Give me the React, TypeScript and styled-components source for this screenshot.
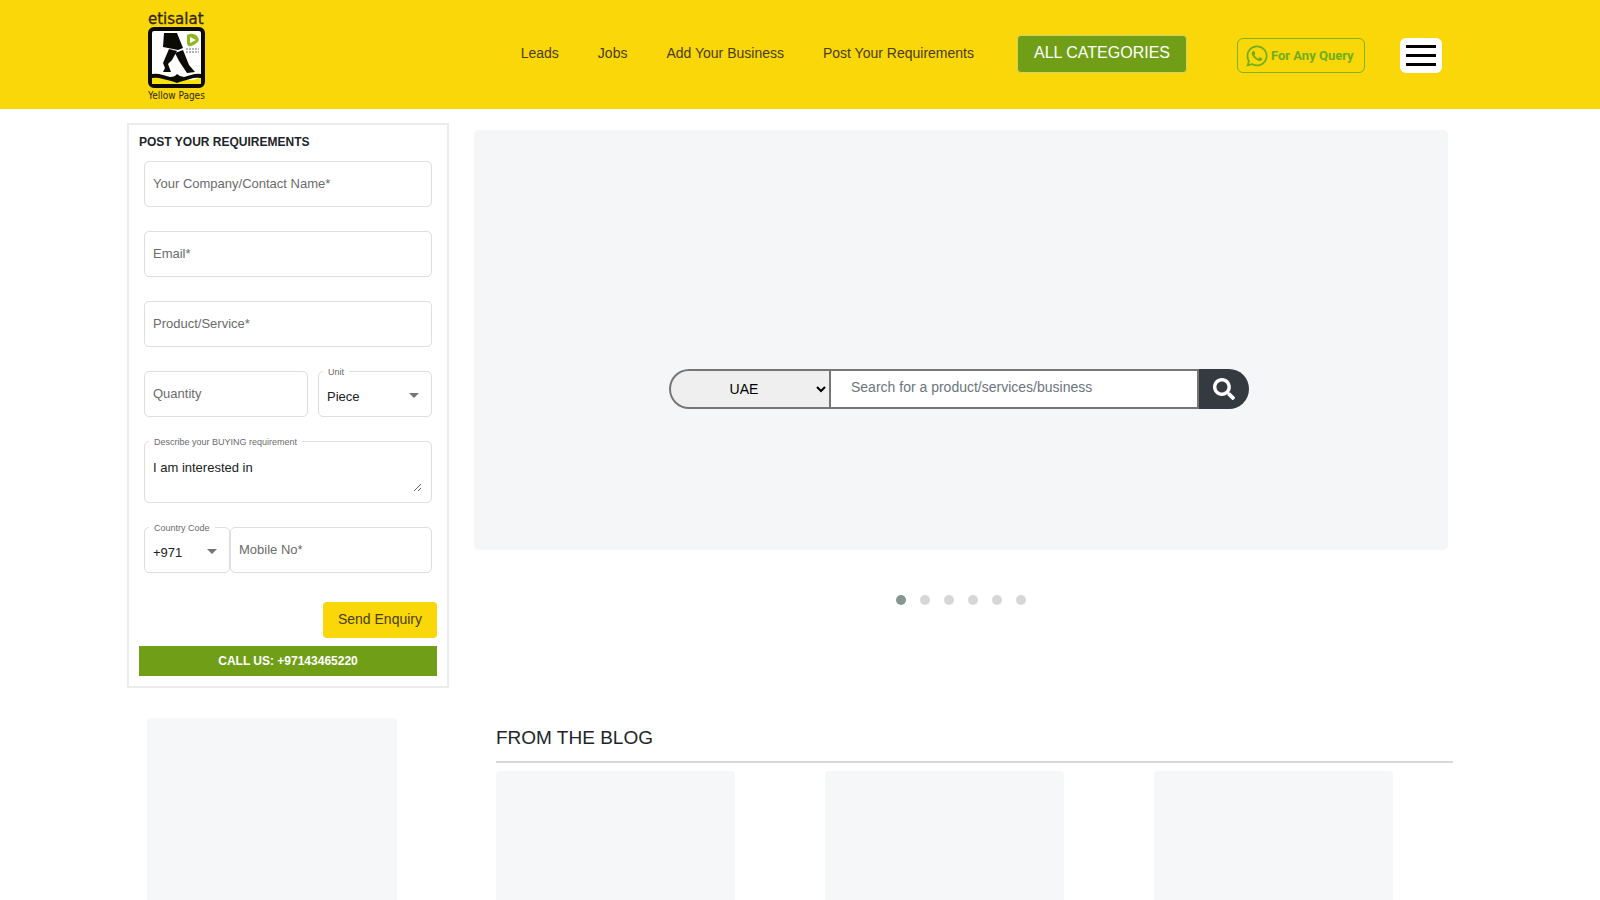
import React from "react";
import styled, { createGlobalStyle } from "styled-components";
import { FaSearch, FaWhatsapp } from "react-icons/fa";

const GlobalStyle = createGlobalStyle`
  *, *::before, *::after { box-sizing: border-box; }
  body {
    margin: 0;
    background: #fff;
    color: #212529;
    font-family: "Liberation Sans", Arial, sans-serif;
    font-size: 14px;
  }
  button, input, select, textarea { font-family: inherit; margin: 0; }
`;

const Header = styled.header`
  display: flex;
  align-items: flex-start;
  height: 109px;
  padding: 0 158px 0 148px;
  background: #f9d709;
`;

const LogoLink = styled.a`
  display: block;
  margin-top: 11px;
`;

const Nav = styled.nav`
  display: flex;
  gap: 39px;
  margin: 44px 43px 0 auto;
`;

const NavLink = styled.a`
  color: #4a3c10;
  font-size: 14px;
  line-height: 18px;
  text-decoration: none;
`;

const CategoriesButton = styled.button`
  height: 38px;
  margin-top: 35px;
  padding: 0 16px 2px;
  border: 1px solid #d5d06a;
  border-radius: 4px;
  background: #709f17;
  color: #fff;
  font-size: 16px;
`;

const QueryLink = styled.a`
  display: flex;
  align-items: center;
  gap: 2px;
  width: 128px;
  height: 35px;
  margin: 38px 35px 0 50px;
  padding-left: 7px;
  border: 1px solid #7fb21c;
  border-radius: 6px;
  color: #6fae1d;
  font-family: Roboto, sans-serif;
  font-size: 13px;
  font-weight: 700;
  text-decoration: none;
  white-space: nowrap;
`;

const MenuButton = styled.button`
  display: flex;
  flex-direction: column;
  justify-content: center;
  gap: 6px;
  width: 42px;
  height: 35px;
  margin-top: 38px;
  padding: 0 6px;
  border: 0;
  border-radius: 6px;
  background: #fff;
`;

const MenuBar = styled.span`
  height: 3px;
  background: #000;
`;

const Top = styled.main`
  display: grid;
  grid-template-columns: 322px minmax(0, 1fr);
  gap: 30px 25px;
  padding: 14px 147px 0 127px;
`;

const Enquiry = styled.form`
  padding: 10px;
  border: 2px solid #ebecee;
`;

const EnquiryTitle = styled.h2`
  margin: 0;
  font-size: 12px;
  line-height: 14px;
`;

const Fields = styled.div`
  display: grid;
  gap: 24px;
  padding: 12px 5px 0;
`;

const FieldRow = styled.div<{ $gap: number }>`
  display: flex;
  gap: ${(p) => p.$gap}px;
`;

const Field = styled.div<{ $width?: number; $tall?: boolean }>`
  position: relative;
  display: flex;
  flex: ${(p) => (p.$width ? `0 0 ${p.$width}px` : "1 1 0")};
  min-width: 0;
  height: ${(p) => (p.$tall ? 62 : 46)}px;
  border: 1px solid #dedede;
  border-radius: 5px;
`;

const FloatingLabel = styled.label`
  position: absolute;
  top: -6px;
  left: 4px;
  padding: 0 5px;
  background: #fff;
  color: #6b6b6b;
  font-size: 9px;
  line-height: 12px;
  white-space: nowrap;
`;

const TextInput = styled.input`
  width: 100%;
  padding: 0 8px 2px;
  border: 0;
  background: transparent;
  color: #212121;
  font-size: 13px;
  &::placeholder { color: #6b6b6b; opacity: 1; }
`;

const FieldSelect = styled.select`
  appearance: none;
  width: 100%;
  padding: 4px 8px 0;
  border: 0;
  background: transparent;
  color: #212121;
  font-size: 13px;
`;

const Caret = styled.span`
  position: absolute;
  top: 21px;
  right: 12px;
  border: 5px solid transparent;
  border-top-color: #757575;
  border-bottom: 0;
  pointer-events: none;
`;

const Message = styled.textarea`
  width: 100%;
  margin: 12px 9px 10px 8px;
  padding: 6px 0 0;
  border: 0;
  background: transparent;
  color: #212121;
  font-size: 13px;
  line-height: 16px;
  resize: vertical;
`;

const SendButton = styled.button`
  display: block;
  height: 36px;
  margin: 29px 0 8px auto;
  padding: 0 15px 2px;
  border: 0;
  border-radius: 4px;
  background: #f9d709;
  color: #4a3c10;
  font-size: 14px;
`;

const CallLink = styled.a`
  display: block;
  background: #709f17;
  color: #fff;
  font-size: 12px;
  font-weight: 700;
  line-height: 30px;
  text-align: center;
  text-decoration: none;
`;

const Showcase = styled.section`
  padding: 7px 5px 0 0;
`;

const Banner = styled.div`
  display: flex;
  justify-content: center;
  align-items: flex-end;
  height: 420px;
  padding-bottom: 141px;
  border-radius: 5px;
  background: #f5f6f8;
`;

const Search = styled.form`
  display: flex;
  width: 580px;
  height: 40px;
  margin-right: 4px;
`;

const RegionSelect = styled.select`
  width: 161px;
  border: 2px solid #767676;
  border-right-width: 1px;
  border-radius: 20px 0 0 20px;
  background: #efefef;
  color: #000;
  font-size: 14px;
  text-align: center;
`;

const SearchInput = styled.input`
  flex: 1;
  min-width: 0;
  padding: 0 20px 4px;
  border: 2px solid #767676;
  border-left-width: 1px;
  background: #fff;
  font-size: 14px;
  &::placeholder { color: #6c757d; opacity: 1; }
`;

const SearchButton = styled.button`
  display: flex;
  align-items: center;
  justify-content: center;
  width: 50px;
  border: 0;
  border-radius: 0 20px 20px 0;
  background: #343a40;
  color: #fff;
  font-size: 22px;
`;

const Dots = styled.div`
  display: flex;
  justify-content: center;
  gap: 14px;
  padding-top: 45px;
`;

const Dot = styled.button<{ $active?: boolean }>`
  width: 10px;
  height: 10px;
  padding: 0;
  border: 0;
  border-radius: 50%;
  background: ${(p) => (p.$active ? "#869791" : "#d6d6d6")};
`;

const Placeholder = styled.div`
  height: 260px;
  border-radius: 4px;
  background: #f5f7f9;
`;

const SideAd = styled(Placeholder)`
  width: 250px;
  margin-left: 20px;
`;

const Blog = styled.section`
  padding-left: 22px;
`;

const BlogTitle = styled.h2`
  margin: 0 0 8px;
  padding: 8px 0 11px;
  border-bottom: 2px solid #d9d9d9;
  font-size: 19px;
  font-weight: 400;
  line-height: 24px;
`;

const BlogGrid = styled.div`
  display: grid;
  grid-template-columns: repeat(3, minmax(0, 239px));
  gap: 90px;
`;

const Logo = () => (
  <svg width="60" height="92" viewBox="0 0 60 92" role="img" aria-label="etisalat Yellow Pages">
    <text x="0" y="13" fontFamily="DejaVu Sans, sans-serif" fontSize="15" fill="#33270a" stroke="#33270a" strokeWidth="0.3">etisalat</text>
    <rect x="2" y="18" width="53" height="57" rx="4" fill="#fff" stroke="#0b0a05" strokeWidth="4" />
    <path d="M4 67 Q10 65 17 68 Q25 72 29 68 Q34 65 38 68 Q45 71 53 66 V73 H4z" fill="#f9e20a" />
    <path d="M4 63 Q9 62 15 64 L22 66 Q27 66 29 63 Q32 66 36 66 L43 64 Q49 62 53 63 V67 Q47 66 42 68 L35 70 Q31 71 29 72 Q27 71 23 70 L15 68 Q9 66 4 67z" fill="#0b0a05" />
    <path d="M16 22 H29 L35 37 L30 39 L15 36z" fill="#0b0a05" />
    <path d="M21 38 L29 40 L24 49 L20 53 L23 61 H15 L17 57 L15 52z" fill="#0b0a05" />
    <path d="M27 42 L35 39 L41 54 L47 61 L39 62 L31 50z" fill="#0b0a05" />
    <path d="M39 24 Q48 20 51 29 Q49 33 43 35 Q39 36 39 31z" fill="#90b51d" />
    <path d="M42 26 L48 29 L42 32z" fill="#fff" />
    <path d="M38 38 H51 M38 41 H51" stroke="#b5b5b5" strokeWidth="2" strokeDasharray="2 1" />
    <text x="0" y="88" fontFamily="DejaVu Sans Condensed, DejaVu Sans, sans-serif" fontSize="10" fill="#33270a">Yellow Pages</text>
  </svg>
);

const navItems = ["Leads", "Jobs", "Add Your Business", "Post Your Requirements"];
const requiredFields = ["Your Company/Contact Name*", "Email*", "Product/Service*"];
const slides = [1, 2, 3, 4, 5, 6];

export default function App() {
  return (
    <>
      <GlobalStyle />
      <Header>
        <LogoLink href="#"><Logo /></LogoLink>
        <Nav>
          {navItems.map((item) => <NavLink key={item} href="#">{item}</NavLink>)}
        </Nav>
        <CategoriesButton type="button">ALL CATEGORIES</CategoriesButton>
        <QueryLink href="#"><FaWhatsapp size={24} />For Any Query</QueryLink>
        <MenuButton type="button" aria-label="Menu">
          <MenuBar /><MenuBar /><MenuBar />
        </MenuButton>
      </Header>
      <Top>
        <Enquiry>
          <EnquiryTitle>POST YOUR REQUIREMENTS</EnquiryTitle>
          <Fields>
            {requiredFields.map((name) => (
              <FieldRow key={name} $gap={0}>
                <Field><TextInput placeholder={name} aria-label={name} /></Field>
              </FieldRow>
            ))}
            <FieldRow $gap={10}>
              <Field><TextInput placeholder="Quantity" aria-label="Quantity" /></Field>
              <Field $width={114}>
                <FloatingLabel htmlFor="unit">Unit</FloatingLabel>
                <FieldSelect id="unit"><option>Piece</option></FieldSelect>
                <Caret />
              </Field>
            </FieldRow>
            <FieldRow $gap={0}>
              <Field $tall>
                <FloatingLabel htmlFor="message">Describe your BUYING requirement</FloatingLabel>
                <Message id="message" defaultValue="I am interested in" />
              </Field>
            </FieldRow>
            <FieldRow $gap={0}>
              <Field $width={86}>
                <FloatingLabel htmlFor="code">Country Code</FloatingLabel>
                <FieldSelect id="code"><option>+971</option></FieldSelect>
                <Caret />
              </Field>
              <Field><TextInput placeholder="Mobile No*" aria-label="Mobile No*" /></Field>
            </FieldRow>
          </Fields>
          <SendButton type="button">Send Enquiry</SendButton>
          <CallLink href="tel:+97143465220">CALL US: +97143465220</CallLink>
        </Enquiry>
        <Showcase>
          <Banner>
            <Search>
              <RegionSelect aria-label="Region"><option>UAE</option></RegionSelect>
              <SearchInput placeholder="Search for a product/services/business" aria-label="Search" />
              <SearchButton type="button" aria-label="Search"><FaSearch /></SearchButton>
            </Search>
          </Banner>
          <Dots>
            {slides.map((n) => <Dot key={n} type="button" aria-label={`Slide ${n}`} $active={n === 1} />)}
          </Dots>
        </Showcase>
        <SideAd />
        <Blog>
          <BlogTitle>FROM THE BLOG</BlogTitle>
          <BlogGrid>
            <Placeholder /><Placeholder /><Placeholder />
          </BlogGrid>
        </Blog>
      </Top>
    </>
  );
}
